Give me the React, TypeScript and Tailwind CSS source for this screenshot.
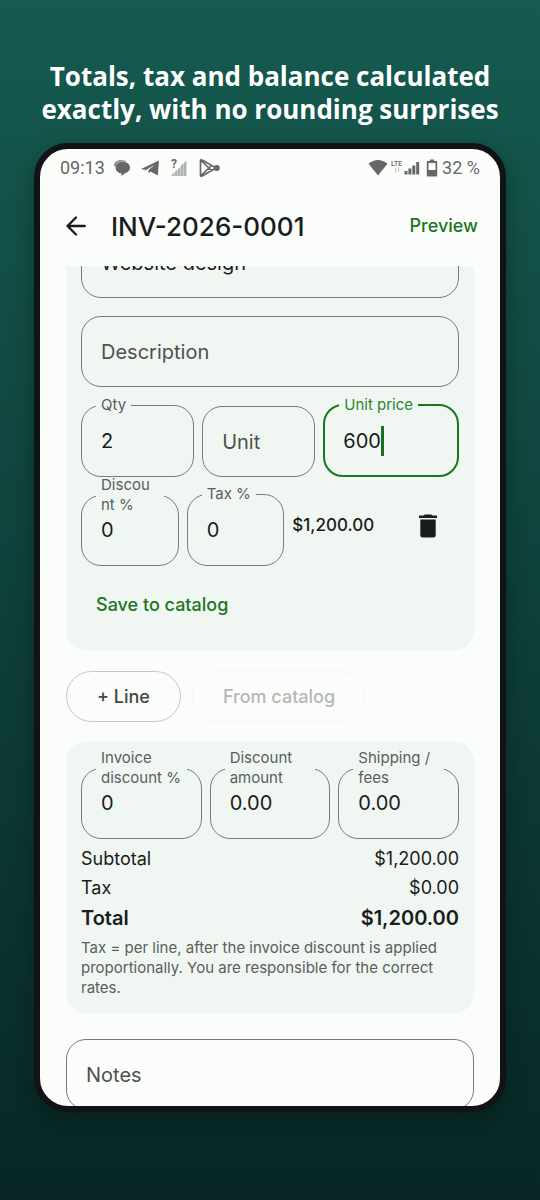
import { useId } from "react";
import type { ReactNode } from "react";
import clsx from "clsx";

type FieldProps = {
  label: string;
  value?: string;
  tall?: boolean;
  focused?: boolean;
  className?: string;
};

// Outlined field whose label sits in a notch of the top border
function NotchedField({ label, value, tall, focused }: FieldProps) {
  const id = useId();
  return (
    <fieldset
      className={clsx("min-w-0 rounded-[20px]", focused ? "border-2 border-[#1d7523]" : "border border-[#767c77]")}
    >
      <legend className={clsx("ml-3.5 px-[5px] text-[15px] leading-5", tall && "w-[calc(100%-28px)]")}>
        <label htmlFor={id} className={clsx("block", focused ? "text-[#2d8533]" : "text-[#59605a]")}>
          {label}
        </label>
      </legend>
      <div
        className={clsx(
          "flex items-center",
          tall ? "mb-5 h-[30px] px-[19px]" : focused ? "mb-2 h-[52px] px-[18px]" : "mb-[9px] h-[52px] px-[19px]"
        )}
      >
        <input
          id={id}
          defaultValue={value}
          inputMode="decimal"
          className={clsx("min-w-0 bg-transparent text-xl text-[#191d1a] outline-none", focused ? "w-[38px]" : "w-full")}
        />
        {focused && <span aria-hidden="true" className="h-[30px] w-[3px] bg-[#1d6b25]" />}
      </div>
    </fieldset>
  );
}

function PlainField({ label, value, className }: FieldProps) {
  return (
    <input
      aria-label={label}
      placeholder={label}
      defaultValue={value}
      className={clsx(
        "h-[71px] w-full min-w-0 rounded-[20px] border border-[#767c77] bg-transparent px-[19px] text-xl text-[#191d1a] outline-none placeholder:text-[#4c524d]",
        className
      )}
    />
  );
}

function StatusBar() {
  return (
    <div className="flex h-[37px] items-center justify-between px-5 text-[#656866]">
      <div className="flex items-center">
        <span className="font-[Roboto,sans-serif] text-lg">09:13</span>
        <svg viewBox="0 0 18 18" className="ml-2 h-[18px] w-[18px]" fill="currentColor" aria-hidden="true">
          <path d="M1 7C.5 3.500 4 1 8.500 1c2.500 0 4.500.8 5.500 2C8 1.800 3.500 3.200 2.200 8z" opacity=".75" />
          <path d="M9.800 2.700c4.200 0 7.200 2.300 7.200 5.800 0 2.700-1.800 4.700-4.500 5.500L8.500 17v-2.600C4.900 14 2.600 11.700 2.600 8.500c0-3.500 3-5.800 7.200-5.800z" />
        </svg>
        <svg viewBox="0 0 18 16" className="ml-2.5 h-4 w-[18px]" fill="currentColor" aria-hidden="true">
          <path d="M0 9 18 .5 16.800 15.500 9.500 11.500 7.800 13.500 7.500 10 14 4.500 5 10z" />
        </svg>
        <svg viewBox="0 0 16 18" className="ml-3 h-[18px] w-4 overflow-visible" fill="currentColor" aria-hidden="true">
          <text x="0" y="9" fontFamily="Roboto, sans-serif" fontSize="12" fontWeight="700">
            ?
          </text>
          <path
            d="M.8 17v-1.500l2.600-2V17zM3.800 17v-4l2.600-2.200V17zM6.800 17v-6.500l2.600-2.200V17zM9.800 17V6.500l2.600-2.200V17zM12.800 17V4l2.600-2.200V17z"
            opacity=".5"
          />
        </svg>
        <svg
          viewBox="0 0 21 18"
          className="ml-3 h-[18px] w-[21px]"
          fill="none"
          stroke="currentColor"
          strokeWidth="1.700"
          strokeLinejoin="round"
          aria-hidden="true"
        >
          <path d="M1.500 1.800v14.400c0 1 .7 1.300 1.500.8L17 9 3 1c-.8-.5-1.500-.2-1.500.8zM2 1.500 12.500 11.500M2 16.500 12.500 6.500" />
          <circle cx="17.800" cy="9" r="2.200" fill="currentColor" />
        </svg>
      </div>
      <div className="flex items-center">
        <svg viewBox="0 0 20 17" className="h-[17px] w-5" fill="currentColor" aria-hidden="true">
          <path d="M10 16.500.5 4.800C6-.3 14-.3 19.500 4.800z" />
        </svg>
        <svg viewBox="0 0 29 17" className="ml-[3px] h-[17px] w-[29px]" fill="currentColor" aria-hidden="true">
          <text x="0" y="7" fontFamily="Roboto, sans-serif" fontSize="7" fontWeight="500">
            LTE
          </text>
          <path d="M4 9h1.200v5H4zM7 8h1.200v5H7z" opacity=".3" />
          <path d="M13.500 12h3v3.500h-3zM17.400 9.500h3v6h-3zM21.300 6.500h3v9h-3zM25.200 3h3v12.500h-3z" />
        </svg>
        <svg viewBox="0 0 12 18" className="ml-1.5 h-[18px] w-3" fill="currentColor" aria-hidden="true">
          <path
            fillRule="evenodd"
            d="M4 .5h4V2h2a1.200 1.200 0 0 1 1.200 1.200v13A1.200 1.200 0 0 1 10 17.500H2A1.200 1.200 0 0 1 .8 16.200v-13A1.200 1.200 0 0 1 2 2h2zM2.500 4v7h7V4z"
          />
        </svg>
        <span className="ml-1 font-[Roboto,sans-serif] text-lg">32 %</span>
      </div>
    </div>
  );
}

function TopBar() {
  return (
    <header className="flex h-20 items-center pr-[22px] pl-5">
      <button type="button" aria-label="Back" className="flex h-8 w-8 items-center justify-center text-[#191d1a]">
        <svg
          viewBox="0 0 20 20"
          className="h-5 w-5"
          fill="none"
          stroke="currentColor"
          strokeWidth="2.300"
          strokeLinecap="round"
          strokeLinejoin="round"
          aria-hidden="true"
        >
          <path d="M18.800 10H1.500M10 1.500 1.500 10l8.500 8.500" />
        </svg>
      </button>
      <h2 className="ml-[19px] flex-1 text-[26px] font-medium text-[#191d1a]">INV-2026-0001</h2>
      <button type="button" className="text-lg font-medium text-[#1d7523]">
        Preview
      </button>
    </header>
  );
}

function Card({ children, className }: { children: ReactNode; className?: string }) {
  return <section className={clsx("bg-[#f0f6f2] px-[15px]", className)}>{children}</section>;
}

function LineItem() {
  return (
    <Card className="rounded-b-[20px] pb-5">
      {/* scrolled partly under the top bar */}
      <PlainField label="Item" value="Website design" className="-mt-[39px] block" />
      <PlainField label="Description" className="mt-[18px] block" />
      <div className="mt-2 grid grid-cols-[1fr_1fr_1.2fr] items-end gap-2">
        <NotchedField label="Qty" value="2" />
        <PlainField label="Unit" />
        <NotchedField label="Unit price" value="600" focused />
      </div>
      <div className="-mt-0.5 grid grid-cols-[1fr_1fr_1fr_61px] items-end gap-2">
        {/* zero-width space: the label may break inside the word */}
        <NotchedField label={"Discou\u200Bnt %"} value="0" tall />
        <NotchedField label="Tax %" value="0" />
        <span className="flex h-20 items-center text-[17px] font-medium text-[#191d1a]">$1,200.00</span>
        <button
          type="button"
          aria-label="Delete line"
          className="flex h-20 items-center justify-center text-[#191d1a]"
        >
          <svg viewBox="0 0 18 24" className="h-6 w-[18px]" fill="currentColor" aria-hidden="true">
            <path d="M0 1.500h4.500l1.300-1h6.400l1.300 1H18V4H0zM1.300 5.500h15.400V21a2.500 2.500 0 0 1-2.500 2.500H3.800A2.500 2.500 0 0 1 1.300 21z" />
          </svg>
        </button>
      </div>
      <button type="button" className="mt-[13px] h-[51px] px-[15px] text-lg font-medium text-[#1d7523]">
        Save to catalog
      </button>
    </Card>
  );
}

function Totals() {
  return (
    <Card className="mt-5 rounded-[20px] pt-1.5 pb-[15px] text-[#191d1a]">
      <div className="grid grid-cols-3 gap-2">
        <NotchedField label="Invoice discount %" value="0" tall />
        <NotchedField label="Discount amount" value="0.00" tall />
        <NotchedField label="Shipping / fees" value="0.00" tall />
      </div>
      <dl className="mt-[7px] text-lg leading-[26px]">
        <div className="flex justify-between">
          <dt>Subtotal</dt>
          <dd>$1,200.00</dd>
        </div>
        <div className="mt-[3px] flex justify-between">
          <dt>Tax</dt>
          <dd>$0.00</dd>
        </div>
        <div className="mt-[3px] flex justify-between text-xl leading-7 font-semibold">
          <dt>Total</dt>
          <dd>$1,200.00</dd>
        </div>
      </dl>
      <p className="mt-1.5 text-[15px] leading-5 text-[#59605a]">
        Tax = per line, after the invoice discount is applied proportionally. You are responsible for the correct
        rates.
      </p>
    </Card>
  );
}

export default function App() {
  return (
    <main className="flex h-screen flex-col bg-linear-to-b from-[#155b50] to-[#082726] px-[34px] pt-[60px] pb-[88px] font-[Inter,sans-serif]">
      <h1 className="text-center font-['Open_Sans','Noto_Sans',sans-serif] text-[26px] leading-[33px] font-bold text-white">
        Totals, tax and balance calculated
        <br />
        exactly, with no rounding surprises
      </h1>
      <div className="mt-[17px] flex min-h-0 flex-1 flex-col overflow-hidden rounded-[34px] border-6 border-[#111317] bg-[#fbfdfa] shadow-[0_8px_20px_rgba(0,20,10,0.4)]">
        <StatusBar />
        <TopBar />
        <div className="min-h-0 flex-1 overflow-hidden px-[26px]">
          <LineItem />
          <div className="mt-[21px] flex gap-[11px]">
            <button
              type="button"
              className="h-[51px] rounded-full border border-[#c3c8c3] px-[30px] text-lg font-medium text-[#434944]"
            >
              + Line
            </button>
            <button
              type="button"
              disabled
              className="h-[51px] rounded-full border border-[#f4f7f4] px-[30px] text-lg font-medium text-[#b5b8b5]"
            >
              From catalog
            </button>
          </div>
          <Totals />
          <PlainField label="Notes" className="mt-[26px] block" />
        </div>
      </div>
    </main>
  );
}
